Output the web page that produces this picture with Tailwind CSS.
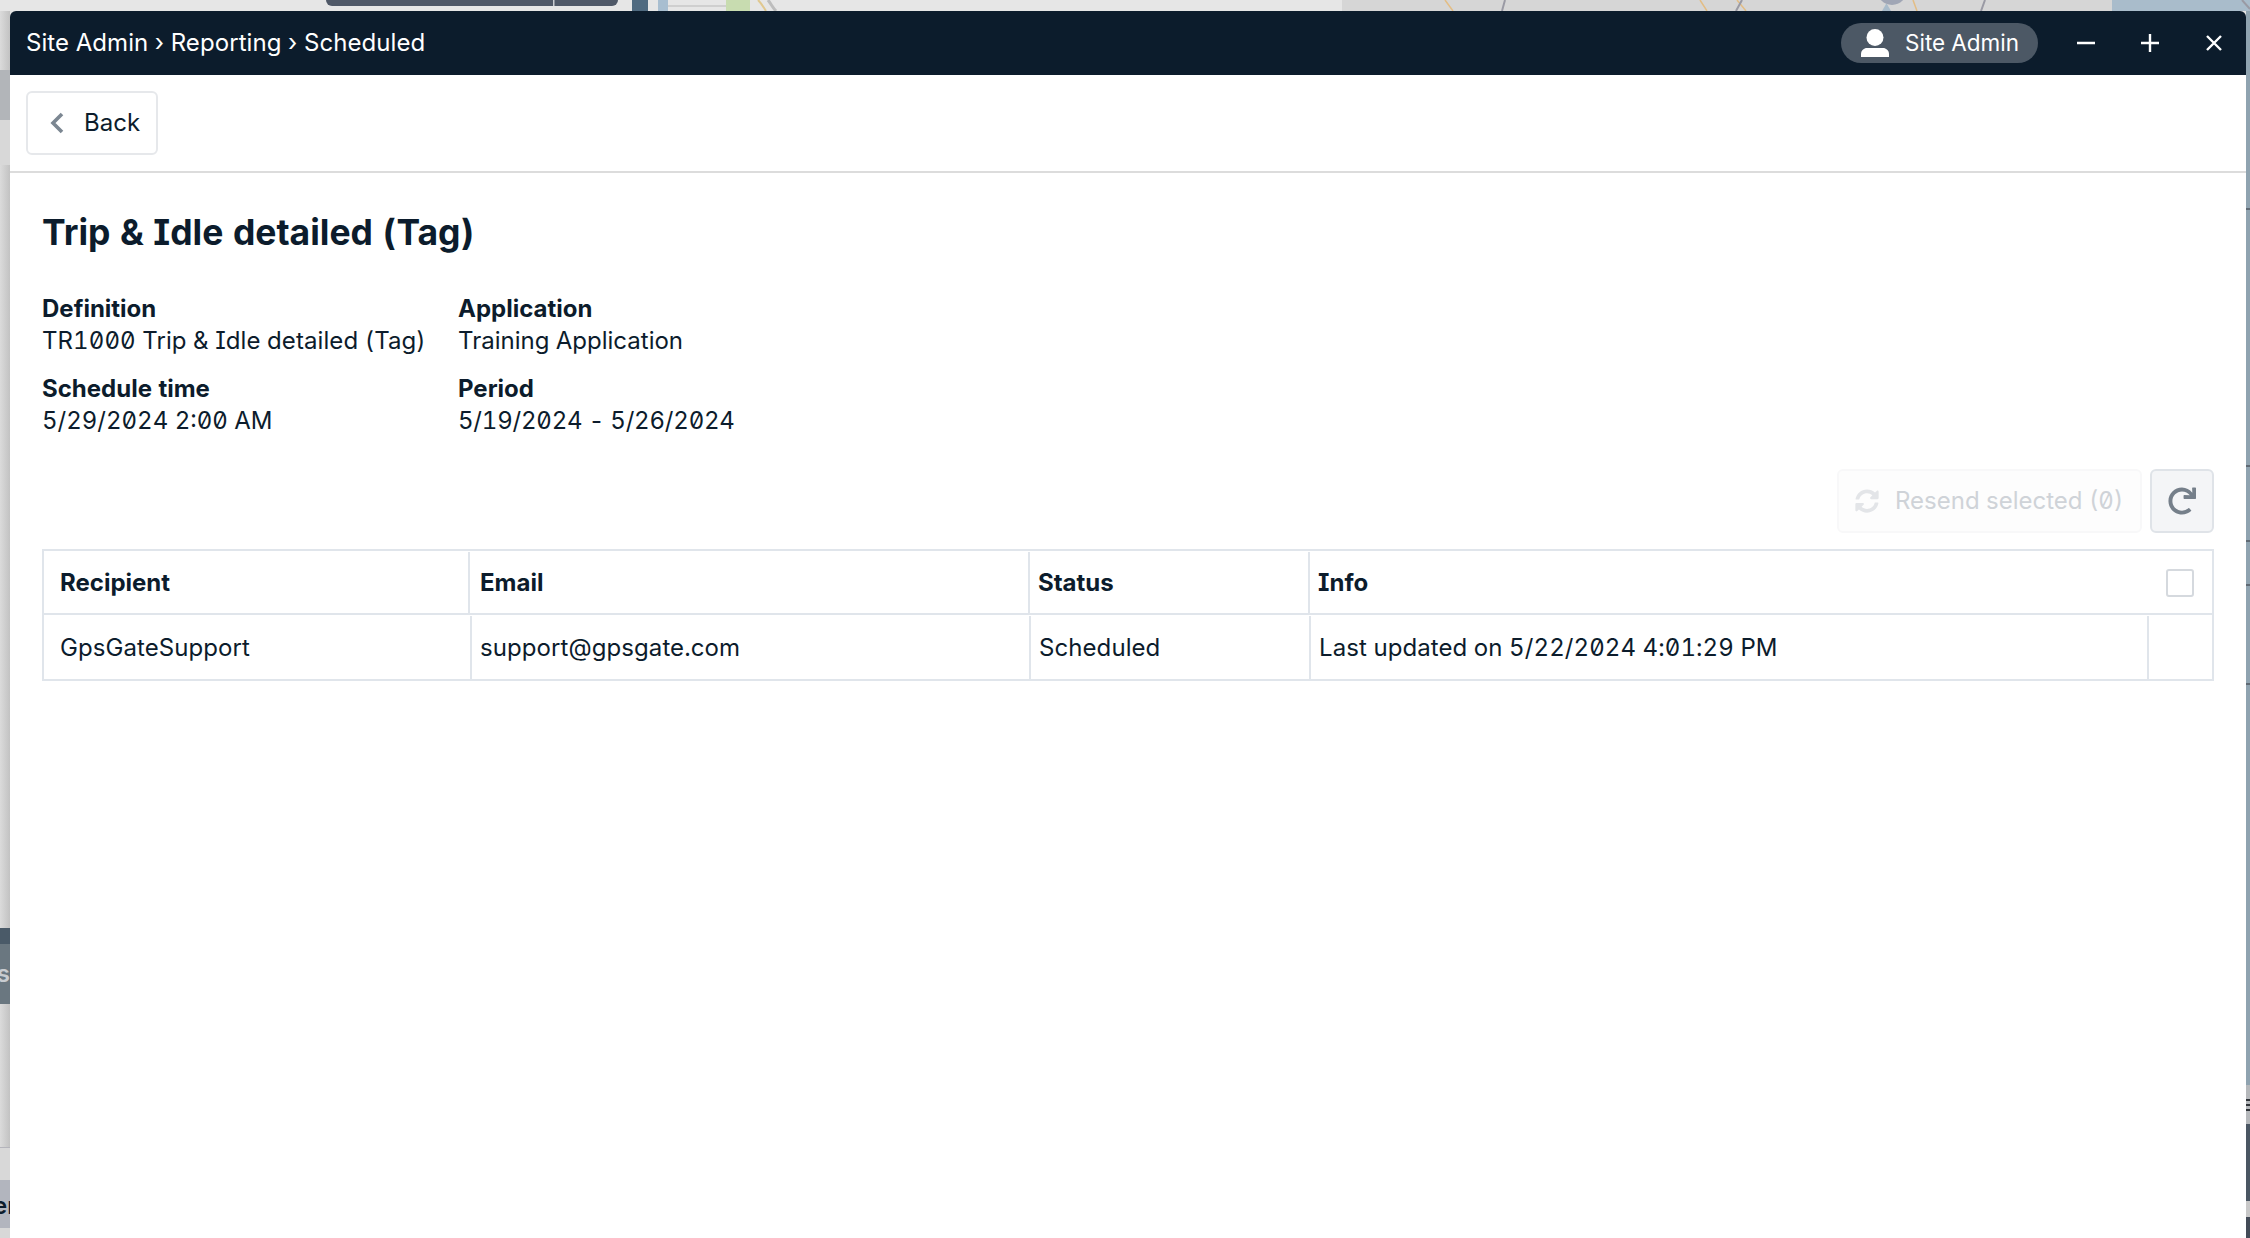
<!DOCTYPE html>
<html lang="en">
<head>
  <meta charset="UTF-8">
  <meta name="viewport" content="width=device-width, initial-scale=1.0">
  <title>Scheduled</title>
  <script src="https://cdn.jsdelivr.net/npm/@tailwindcss/browser@4"></script>
</head>
<body class="relative h-[1238px] w-[2250px] overflow-hidden bg-[#e4e4e4] font-['Inter',sans-serif] text-[#0c1c2c] [font-feature-settings:'zero','cv08','tnum']">
  <!-- dimmed page behind the window -->
  <svg class="absolute left-0 top-0" width="2250" height="11" viewBox="0 0 2250 11">
    <rect width="2250" height="11" fill="#e6e6e6"/>
    <rect x="326" y="-6" width="292" height="12" rx="6" fill="#4f5867"/>
    <rect x="553" width="1.5" height="6" fill="#c9ccd1"/>
    <rect x="632" width="16" height="11" fill="#4f6a80"/>
    <rect x="658" width="10" height="11" fill="#a8bed0"/>
    <rect x="668" y="5" width="58" height="2" fill="#cfcfcf"/>
    <rect x="726" width="24" height="11" fill="#c8dcb0"/>
    <path d="M758 0c4 4 6 8 8 11" stroke="#e0c890" stroke-width="2" fill="none"/>
    <path d="M768 0c3 4 5 8 8 11" stroke="#bdbdbd" stroke-width="3" fill="none"/>
    <rect x="1342" width="770" height="11" fill="#d6d6d6"/>
    <rect x="2112" width="138" height="11" fill="#a9bccb"/>
    <path d="M1445 0l8 11M1700 0l7 11M1737 0l9 11M1913 0l4 11" stroke="#e3bd85" stroke-width="1.5" fill="none"/>
    <path d="M1505 0l-3 11M1742 0l-6 11M1985 0l-4 11M2242 0l8 9" stroke="#9a9aa4" stroke-width="2" fill="none"/>
    <circle cx="1892" cy="-10" r="15" fill="#a0a6b5"/>
    <path d="M1882 11l4-7h1l4 7z" fill="#a9bccb"/>
  </svg>

  <div class="absolute left-0 top-[11px] h-[1227px] w-[10px] bg-gradient-to-r from-[#dbdbdb] to-[#c2c2c2]"></div>
  <div class="absolute left-0 top-[70px] h-[50px] w-[10px] bg-[#b2b5b9]"></div>
  <div class="absolute left-0 top-[120px] h-[45px] w-[10px] bg-[#d8d8d8]"></div>
  <div class="absolute left-0 top-[928px] h-[16px] w-[10px] bg-[#4a5a68]"></div>
  <div class="absolute left-0 top-[944px] flex h-[60px] w-[10px] items-center justify-end overflow-hidden bg-[#6a7780] text-[24px] font-semibold text-[#c8ccd0]">s</div>
  <div class="absolute left-0 top-[1147px] h-[1px] w-[10px] bg-[#b4b4bb]"></div>
  <div class="absolute left-0 top-[1148px] h-[90px] w-[10px] bg-[#d8d8d8]"></div>
  <div class="absolute left-0 top-[1180px] flex h-[48px] w-[10px] items-center overflow-hidden bg-[#b2b5be] pt-[4px] text-[24px] font-semibold text-[#0c1c2c]"><span class="ml-[-7px]">er</span></div>

  <div class="absolute right-0 top-[11px] h-[1227px] w-[4px] bg-[#8fa3b0]"></div>
  <div class="absolute right-0 top-[208px] h-[2px] w-[4px] bg-[#5f6a74]"></div>
  <div class="absolute right-0 top-[465px] h-[2px] w-[4px] bg-[#5f6a74]"></div>
  <div class="absolute right-0 top-[540px] h-[2px] w-[4px] bg-[#5f6a74]"></div>
  <div class="absolute right-0 top-[584px] h-[2px] w-[4px] bg-[#5f6a74]"></div>
  <div class="absolute right-0 top-[683px] h-[2px] w-[4px] bg-[#5f6a74]"></div>
  <div class="absolute right-0 top-[1085px] flex h-[39px] w-[4px] flex-col justify-center gap-[3px] bg-[#b5b8bb]">
    <div class="h-[2px] bg-[#2f3338]"></div>
    <div class="h-[2px] bg-[#2f3338]"></div>
    <div class="h-[2px] bg-[#2f3338]"></div>
  </div>
  <div class="absolute right-0 top-[1124px] h-[77px] w-[4px] bg-[#4a5663]"></div>
  <div class="absolute right-0 top-[1201px] h-[16px] w-[4px] bg-[#c8c8c8]"></div>
  <div class="absolute right-0 top-[1217px] h-[21px] w-[4px] bg-[#434b57]"></div>

  <!-- window -->
  <div class="absolute left-[10px] top-[11px] flex h-[1227px] w-[2236px] flex-col overflow-hidden rounded-t-md bg-white">
    <div class="flex h-[64px] items-center bg-[#0c1c2c] pl-[16px] pr-[22px] text-white">
      <div class="text-[24px] tracking-[0.08px]">Site Admin › Reporting › Scheduled</div>
      <div class="ml-auto flex h-[40px] w-[197px] items-center rounded-full bg-[#4c5865] pl-[20px]">
        <svg class="h-[28px] w-[28px]" viewBox="0 0 28 28" fill="#fff"><circle cx="14" cy="8.5" r="8.5"/><path d="M0 28v-3c0-3.5 3-6 6-6h16c3 0 6 2.5 6 6v3z"/></svg>
        <span class="ml-[16px] text-[22.5px]">Site Admin</span>
      </div>
      <div class="ml-[38px] flex items-center gap-[44px]">
        <svg class="h-[20px] w-[20px]" viewBox="0 0 20 20" stroke="#fff" stroke-width="2.4" fill="none"><path d="M1 10h18"/></svg>
        <svg class="h-[20px] w-[20px]" viewBox="0 0 20 20" stroke="#fff" stroke-width="2.4" fill="none"><path d="M1 10h18M10 1v18"/></svg>
        <svg class="h-[20px] w-[20px]" viewBox="0 0 20 20" stroke="#fff" stroke-width="2.4" fill="none"><path d="M3 3l14 14M17 3L3 17"/></svg>
      </div>
    </div>

    <div class="flex h-[98px] items-center border-b-2 border-[#dcdcdc] pl-[16px]">
      <button class="flex h-[64px] w-[132px] items-center rounded-md border-2 border-[#e6e8eb] pl-[21px]">
        <svg class="h-[22px] w-[15px]" viewBox="0 0 15 22" fill="none" stroke="#7c8792" stroke-width="3.6"><path d="M13 2L4 11l9 9"/></svg>
        <span class="ml-[20px] text-[24px]">Back</span>
      </button>
    </div>

    <div class="px-[32px]">
      <h1 class="mt-[38px] text-[35.5px] leading-[44px] font-bold">Trip &amp; Idle detailed (Tag)</h1>
      <div class="mt-[38px] grid w-[800px] grid-cols-[416px_1fr] gap-y-[16px] text-[24px] leading-[32px]">
        <div><div class="font-bold">Definition</div><div class="tracking-[0.08px]">TR1000 Trip &amp; Idle detailed (Tag)</div></div>
        <div><div class="font-bold">Application</div><div>Training Application</div></div>
        <div><div class="font-bold">Schedule time</div><div>5/29/2024 2:00 AM</div></div>
        <div><div class="font-bold">Period</div><div class="tracking-[-0.2px]">5/19/2024 - 5/26/2024</div></div>
      </div>

      <div class="mt-[32px] flex justify-end gap-[8px]">
        <button class="flex h-[64px] w-[305px] items-center rounded-md border-2 border-[#f8f8f9] bg-[#fdfdfd] pl-[16px] text-[24px] text-[#cfd3d8]">
          <svg class="h-[24px] w-[24px]" viewBox="0 0 512 512" fill="#e3e5e8"><path d="M370.7 133.3C339.5 104 298.9 88 255.8 88c-77.5 0-144.3 53.1-162.8 126.9-1.3 5.4-6.1 9.1-11.6 9.1H24.1c-7.5 0-13.2-6.8-11.8-14.2C33.9 94.9 134.8 8 256 8c66.4 0 126.8 26.1 171.3 68.7L463 41c15.1-15.1 41-4.4 41 17v134c0 13.3-10.7 24-24 24H346c-21.4 0-32.1-25.9-17-41zM32 296h134c21.4 0 32.1 25.9 17 41l-41.7 41.7c31.2 29.3 71.8 45.3 114.9 45.3 77.4 0 144.3-53.1 162.8-126.8 1.3-5.4 6.1-9.1 11.6-9.1h57.3c7.5 0 13.2 6.8 11.8 14.2C478.1 417.1 377.2 504 256 504c-66.4 0-126.8-26.1-171.3-68.7L49 471c-15.1 15.1-41 4.4-41-17V320c0-13.3 10.7-24 24-24z"/></svg>
          <span class="ml-[16px]">Resend selected (0)</span>
        </button>
        <button class="flex h-[64px] w-[64px] items-center justify-center rounded-md border-2 border-[#dfe3e8] bg-[#f4f5f7]">
          <svg class="h-[28px] w-[28px]" viewBox="0 0 512 512" fill="#757f8a"><path d="M500 8h-47.4c-6.8 0-12.2 5.7-12 12.5l4 82.8A247.4 247.4 0 0 0 256 8C119.3 8 8 119.5 8 256.3 8.1 393.2 119.1 504 256 504c63.9 0 122.1-24.1 166.1-63.7 5.1-4.6 5.4-12.5.5-17.4l-34-34c-4.5-4.5-11.7-4.7-16.4-.7A175.5 175.5 0 0 1 256 432c-97.3 0-176-78.7-176-176s78.7-176 176-176c58.5 0 110.4 28.5 142.4 72.5l-101.4-4.9c-6.8-.3-12.6 5.1-12.6 12V207c0 6.6 5.4 12 12 12h204c6.6 0 12-5.4 12-12V20c0-6.6-5.4-12-12-12z"/></svg>
        </button>
      </div>

      <div class="mt-[16px] border-2 border-[#e0e5eb] text-[24px]">
        <div class="flex h-[64px] items-center border-b-2 border-[#e0e5eb] pt-[1px] font-bold">
          <div class="flex h-full w-[426px] items-center border-r-2 border-[#e0e5eb] pl-[16px]">Recipient</div>
          <div class="flex h-full w-[560px] items-center border-r-2 border-[#e0e5eb] pl-[10px]">Email</div>
          <div class="flex h-full w-[280px] items-center border-r-2 border-[#e0e5eb] pl-[8px]">Status</div>
          <div class="flex h-full flex-1 items-center pl-[8px]">Info</div>
          <div class="mr-[18px] h-[28px] w-[28px] rounded-[3px] border-2 border-[#d5d9de]"></div>
        </div>
        <div class="flex h-[64px] items-center pt-[1px] tracking-[0.08px]">
          <div class="flex h-full w-[428px] items-center border-r-2 border-[#e0e5eb] pl-[16px]">GpsGateSupport</div>
          <div class="flex h-full w-[559px] items-center border-r-2 border-[#e0e5eb] pl-[8px]">support@gpsgate.com</div>
          <div class="flex h-full w-[280px] items-center border-r-2 border-[#e0e5eb] pl-[8px]">Scheduled</div>
          <div class="flex h-full flex-1 items-center border-r-2 border-[#e0e5eb] pl-[8px]">Last updated on 5/22/2024 4:01:29 PM</div>
          <div class="h-full w-[63px]"></div>
        </div>
      </div>
    </div>
  </div>
</body>
</html>
